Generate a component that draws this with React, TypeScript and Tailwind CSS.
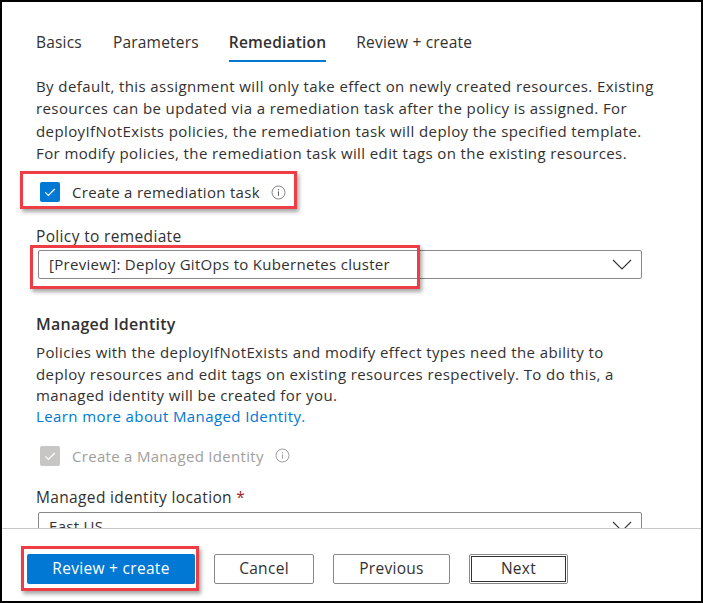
import React from "react";

const font = { fontFamily: '"Open Sans", "Noto Sans", sans-serif' };

function InfoIcon({ muted }: { muted?: boolean }) {
  const c = muted ? "#a19f9d" : "#8a8886";
  const d = muted ? "#a19f9d" : "#605e5c";
  return (
    <svg width="15" height="15" viewBox="0 0 15 15" className="shrink-0">
      <circle cx="7.5" cy="7.5" r="6.5" fill="none" stroke={c} strokeWidth="1" />
      <rect x="7" y="6.4" width="1" height="4.4" fill={d} />
      <rect x="7" y="4.1" width="1" height="1.2" fill={d} />
    </svg>
  );
}

function Check() {
  return (
    <svg width="14" height="14" viewBox="0 0 14 14">
      <path d="M2.3 7.4 L5.4 10.5 L11.8 4" fill="none" stroke="white" strokeWidth="1.2" />
    </svg>
  );
}

function Chevron() {
  return (
    <svg width="20" height="11" viewBox="0 0 20 11">
      <path d="M1 1 L10 10 L19 1" fill="none" stroke="#323130" strokeWidth="1.1" />
    </svg>
  );
}

function RedBox({ className }: { className: string }) {
  return (
    <div
      className={`pointer-events-none absolute border-[3px] border-[#ee3d45] shadow-[2px_3px_4px_rgba(0,0,0,0.35)] ${className}`}
    />
  );
}

export default function App() {
  return (
    <div
      className="w-[703px] h-[603px] bg-white border-2 border-black flex flex-col overflow-hidden text-[#323130]"
      style={font}
    >
      <div className="flex-1 overflow-hidden pl-[34px] pr-[59px]">
        {/* Tabs */}
        <div className="flex mt-[28px] h-[33px] text-[15.5px] tracking-[0.2px] leading-[24px]">
          <div className="mr-[31px]">Basics</div>
          <div className="mr-[30px]">Parameters</div>
          <div className="mr-[30px] font-semibold relative">
            Remediation
            <div className="absolute left-0 right-0 top-[30px] h-[2px] bg-[#0078d4]" />
          </div>
          <div>Review + create</div>
        </div>

        <div className="mt-[12px] text-[15px] tracking-[0.4px] leading-[22.3px] whitespace-nowrap">
          <div>By default, this assignment will only take effect on newly created resources. Existing</div>
          <div>resources can be updated via a remediation task after the policy is assigned. For</div>
          <div>deployIfNotExists policies, the remediation task will deploy the specified template.</div>
          <div>For modify policies, the remediation task will edit tags on the existing resources.</div>
        </div>

        {/* Checkbox */}
        <div className="relative mt-[16px] flex items-center h-[24px] pl-[4px]">
          <RedBox className="left-[-16px] top-[-9px] w-[277px] h-[38px]" />
          <div className="w-[20px] h-[20px] rounded-[2px] bg-[#0078d4] flex items-center justify-center">
            <Check />
          </div>
          <span className="ml-[12px] text-[15px] tracking-[0.3px]">Create a remediation task</span>
          <span className="ml-[11px] flex"><InfoIcon /></span>
        </div>

        <div className="mt-[22px] text-[15.5px] tracking-[0.35px] leading-[20px]">Policy to remediate</div>
        <div className="relative mt-[4px] ml-[2px] h-[29px] border border-[#8a8886] rounded-[2px] flex items-center pl-[10px] pr-[9px]">
          <RedBox className="left-[-9px] top-[-6px] w-[390px] h-[44px]" />
          <span className="flex-1 text-[15px] tracking-[0.3px]">[Preview]: Deploy GitOps to Kubernetes cluster</span>
          <Chevron />
        </div>

        <div className="mt-[34px] text-[16px] font-semibold tracking-[0.25px] leading-[22px]">Managed Identity</div>
        <div className="mt-[7px] text-[15px] tracking-[0.4px] leading-[21.4px] whitespace-nowrap">
          <div>Policies with the deployIfNotExists and modify effect types need the ability to</div>
          <div>deploy resources and edit tags on existing resources respectively. To do this, a</div>
          <div>managed identity will be created for you.</div>
          <div className="text-[#0078d4]">Learn more about Managed Identity.</div>
        </div>

        <div className="mt-[16px] flex items-center h-[24px] pl-[4px]">
          <div className="w-[20px] h-[20px] rounded-[2px] bg-[#c8c6c4] flex items-center justify-center">
            <Check />
          </div>
          <span className="ml-[12px] text-[15px] tracking-[0.3px] text-[#a19f9d]">Create a Managed Identity</span>
          <span className="ml-[11px] flex"><InfoIcon muted /></span>
        </div>

        <div className="mt-[19px] text-[15.5px] tracking-[0.35px] leading-[20px]">
          Managed identity location <span className="text-[#a4262c]">*</span>
        </div>
        <div className="mt-[5px] ml-[2px] h-[29px] border border-[#8a8886] rounded-[2px] flex items-center pl-[10px] pr-[9px]">
          <span className="flex-1 text-[15px] tracking-[0.3px]">East US</span>
          <Chevron />
        </div>
      </div>

      {/* Footer */}
      <div className="h-[73px] shrink-0 border-t border-[#c8c6c4] flex items-center pl-[25px] gap-[19px] pt-[7px]">
        <div className="relative flex">
          <RedBox className="left-[-6px] top-[-8px] w-[178px] h-[45px]" />
          <button className="w-[168px] h-[30px] bg-[#0078d4] text-white rounded-[2px] text-[15.5px] tracking-[0.3px]">
            Review + create
          </button>
        </div>
        <button className="w-[100px] h-[30px] border border-[#8a8886] rounded-[2px] text-[15.5px] tracking-[0.3px] bg-white">
          Cancel
        </button>
        <button className="w-[117px] h-[30px] border border-[#8a8886] rounded-[2px] text-[15.5px] tracking-[0.3px] bg-white">
          Previous
        </button>
        <button className="w-[99px] h-[30px] border border-[#8a8886] rounded-[2px] text-[15.5px] tracking-[0.3px] bg-white p-[1px]">
          <div className="w-full h-full border border-[#323130] flex items-center justify-center">Next</div>
        </button>
      </div>
    </div>
  );
}
